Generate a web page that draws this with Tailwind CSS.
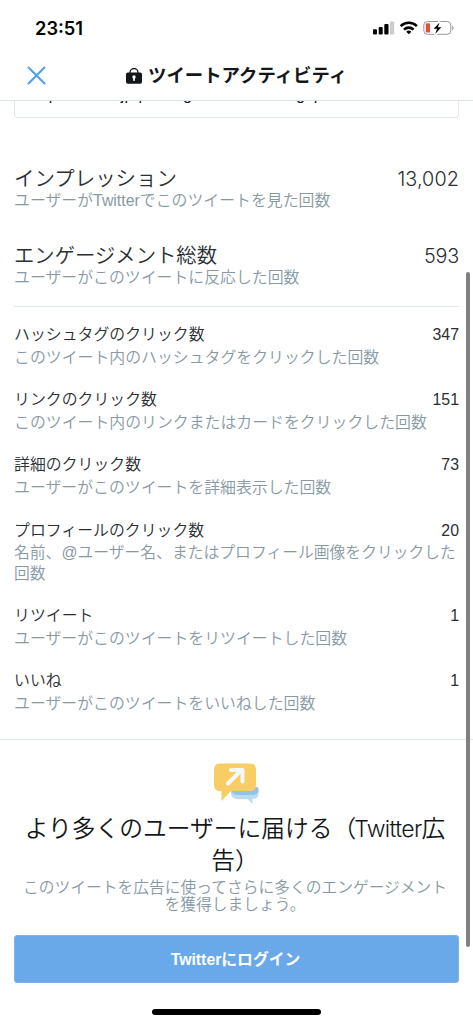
<!DOCTYPE html>
<html lang="ja">
<head>
<meta charset="utf-8">
<title>ツイートアクティビティ</title>
<script src="https://cdn.jsdelivr.net/npm/@tailwindcss/browser@4"></script>
</head>
<body class="w-[473px] h-[1024px] overflow-hidden bg-white relative flex flex-col text-[#292f33] font-[350] font-['Liberation_Sans','Noto_Sans_CJK_JP',sans-serif]">
  <header class="h-[101px] shrink-0 border-b border-[#dbe1ee] flex flex-col">
    <div class="h-[56px] flex items-center justify-between pl-[35px] pr-[18px] text-black">
      <span class="text-[18.3px] leading-none font-semibold font-[Inter]">23:51</span>
      <svg class="w-[82px] h-[16px]" viewBox="0 0 82 16">
        <rect x="0" y="9.3" width="4" height="5.2" rx="1"/><rect x="5.7" y="7" width="4" height="7.5" rx="1"/><rect x="11.3" y="4" width="4.2" height="10.5" rx="1"/><rect x="17" y="1.5" width="4.2" height="13" rx="1" fill="#ccc"/>
        <g fill="none" stroke="#000" stroke-width="2.6"><path d="M27.7 6.1a11.5 11.5 0 0 1 16.2 0"/><path d="M31 9.6a6.9 6.9 0 0 1 9.6 0"/></g><path d="M35.8 14.3l-2.5-2.6a3.6 3.6 0 0 1 5 0z"/>
        <rect x="50.8" y="1.5" width="27" height="12.8" rx="3.6" fill="none" stroke="#999"/><path d="M79.2 5.4v5c1.7-.6 1.7-4.4 0-5z" fill="#999"/>
        <rect x="52.8" y="3.3" width="4.2" height="9.3" rx="1.2" fill="#eb4d3d"/>
        <path d="M66.5 1.5L60.5 8.6h3.3l-1.6 6L68.3 7h-3.4z" fill="#fff" stroke="#fff" stroke-width="2.5"/><path d="M66.5 2.5L60.6 8.7h3.4l-1.7 5.3L68.3 7.2h-3.4z"/>
      </svg>
    </div>
    <div class="h-[39px] flex items-center pl-[27px]">
      <svg class="w-[19px] h-[19px]" viewBox="0 0 19 19" stroke="#4a9fee" stroke-width="2" fill="none"><path d="M1 1l17 17M18 1L1 18"/></svg>
      <svg class="w-[16px] h-[16px] ml-[80px]" viewBox="0 0 16 16"><path d="M4 6V4.5a4 4 0 0 1 8 0V6" fill="none" stroke="#14171a" stroke-width="1.3"/><rect y="4.5" width="16" height="11.2" rx="1.8" fill="#14171a"/><circle cx="8" cy="9" r="1.7" fill="#fff"/><path d="M7.3 9.5h1.4l.3 3.2H7z" fill="#fff"/></svg>
      <h1 class="ml-[6px] mt-px text-[18.4px] leading-[24px] font-bold text-[#14171a]">ツイートアクティビティ</h1>
    </div>
  </header>
  <div class="h-[17px] shrink-0 mx-[14px] border border-t-0 border-[#e1e8ed] rounded-b-[4px] overflow-hidden flex items-end pl-[16px]">
    <p class="text-[16px] leading-[18px] mb-[13px] whitespace-pre font-normal text-[#14171a]">https://news.jp-pandageneral-numbergop</p>
  </div>
  <main class="px-[14px] flex flex-col text-[15.88px] leading-[21px] whitespace-nowrap">
    <section class="mt-[48px] h-[77px]">
      <div class="flex justify-between text-[20.45px] leading-[26px]"><h2>インプレッション</h2><span class="font-[Inter] font-light text-[19.8px] tracking-[0.1px]">13,002</span></div>
      <p class="text-[#8899a6] -mt-[2px]">ユーザーがTwitterでこのツイートを見た回数</p>
    </section>
    <section class="h-[64px] border-b border-[#e1e8ed]">
      <div class="flex justify-between text-[20.35px] leading-[26px]"><h2>エンゲージメント総数</h2><span class="font-[Inter] font-light text-[19.8px] tracking-[-0.2px]">593</span></div>
      <p class="text-[#8899a6] -mt-[2px]">ユーザーがこのツイートに反応した回数</p>
    </section>
    <section class="mt-[16px] h-[65px]">
      <div class="flex justify-between leading-[23px]"><h3>ハッシュタグのクリック数</h3><span>347</span></div>
      <p class="text-[#8899a6] mt-px">このツイート内のハッシュタグをクリックした回数</p>
    </section>
    <section class="h-[65px]">
      <div class="flex justify-between leading-[23px]"><h3>リンクのクリック数</h3><span>151</span></div>
      <p class="text-[#8899a6] mt-px">このツイート内のリンクまたはカードをクリックした回数</p>
    </section>
    <section class="h-[66px]">
      <div class="flex justify-between leading-[23px]"><h3>詳細のクリック数</h3><span>73</span></div>
      <p class="text-[#8899a6] mt-px">ユーザーがこのツイートを詳細表示した回数</p>
    </section>
    <section class="h-[85px]">
      <div class="flex justify-between leading-[23px]"><h3>プロフィールのクリック数</h3><span>20</span></div>
      <p class="text-[#8899a6] text-[15.8px]">名前、@ユーザー名、またはプロフィール画像をクリックした<br>回数</p>
    </section>
    <section class="h-[65px]">
      <div class="flex justify-between leading-[23px]"><h3>リツイート</h3><span>1</span></div>
      <p class="text-[#8899a6] mt-px">ユーザーがこのツイートをリツイートした回数</p>
    </section>
    <section class="h-[70px]">
      <div class="flex justify-between leading-[23px]"><h3>いいね</h3><span>1</span></div>
      <p class="text-[#8899a6] mt-px">ユーザーがこのツイートをいいねした回数</p>
    </section>
  </main>
  <footer class="border-t border-[#e1e8ed] px-[14px] flex flex-col items-center text-center whitespace-nowrap">
    <svg class="w-[46px] h-[42px] mt-[23px] ml-px" viewBox="0 0 46 42"><path d="M17 27h27.5v3q0 6-6 6v5l-5-5H24q-7 0-7-6z" fill="#bbdaf3"/><path d="M17 24h26.5q1 1 1 2.500 0 5.500-6 5.500H24q-6 0-7-5z" fill="#94c3ea"/><path d="M6 .5h30q6 0 6 6V22q0 6-6 6H17L7.5 38V28H6q-6 0-6-6V6.5q0-6 6-6z" fill="#f8cd64"/><path d="M14 20.5L27.5 7M17 7h11.5v11.5" fill="none" stroke="#f5f8fa" stroke-width="4" stroke-linecap="round" stroke-linejoin="round"/></svg>
    <h2 class="mt-[8px] mr-[3px] text-[23.75px] leading-[32px] text-[#14171a]">より多くのユーザーに届ける（<span class="font-[Inter] font-light text-[23px] tracking-[-0.65px] -ml-[2px]">Twitter</span>広<br>告）</h2>
    <p class="mt-[2px] mr-[3px] text-[15.75px] leading-[17px] text-[#8899a6]">このツイートを広告に使ってさらに多くのエンゲージメント<br>を獲得しましょう。</p>
    <button class="mt-[22px] w-full h-[48px] rounded-[3px] bg-[#6aa9e9] border border-[#7bb3eb] text-white font-bold text-[15.8px] pr-[2px] pt-[2px]">Twitterにログイン</button>
    <div class="mt-[26px] w-[169px] h-[6px] rounded-full bg-black"></div>
  </footer>
  <div class="absolute right-[3px] top-[272px] w-[4px] h-[675px] rounded-full bg-[#808080]"></div>
</body>
</html>
